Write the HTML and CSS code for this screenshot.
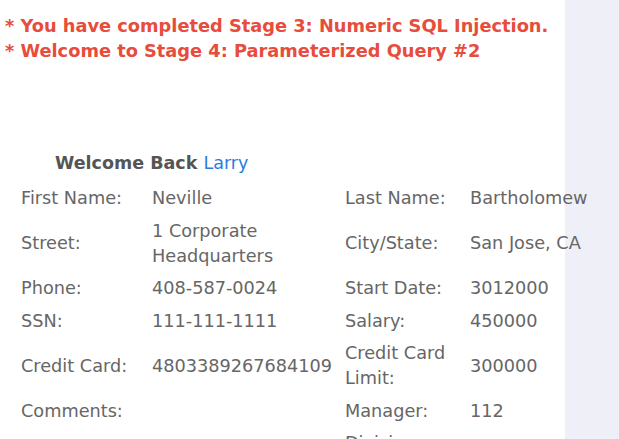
FILE: index.html
```html
<!DOCTYPE html>
<html>
<head>
<meta charset="utf-8">
<link rel="stylesheet" href="styles.css">
</head>
<body>
<div class="page">
  <main class="content">
    <div class="messages">
      <p class="msg">* You have completed Stage 3: Numeric SQL Injection.</p>
      <p class="msg">* Welcome to Stage 4: Parameterized Query #2</p>
    </div>
    <h2 class="welcome">Welcome Back <span class="user">Larry</span></h2>
    <div class="profile">
      <div class="lbl">First Name:</div><div class="val">Neville</div>
      <div class="lbl">Last Name:</div><div class="val">Bartholomew</div>

      <div class="lbl">Street:</div><div class="val">1 Corporate<br>Headquarters</div>
      <div class="lbl">City/State:</div><div class="val">San Jose, CA</div>

      <div class="lbl">Phone:</div><div class="val">408-587-0024</div>
      <div class="lbl">Start Date:</div><div class="val">3012000</div>

      <div class="lbl">SSN:</div><div class="val">111-111-1111</div>
      <div class="lbl">Salary:</div><div class="val">450000</div>

      <div class="lbl">Credit Card:</div><div class="val">4803389267684109</div>
      <div class="lbl">Credit Card<br>Limit:</div><div class="val">300000</div>

      <div class="lbl">Comments:</div><div class="val"></div>
      <div class="lbl">Manager:</div><div class="val">112</div>

      <div class="lbl"></div><div class="val"></div>
      <div class="lbl">Division:</div><div class="val"></div>
    </div>
  </main>
  <aside class="side"></aside>
</div>
</body>
</html>
```
FILE: styles.css
```css
html, body {
  margin: 0;
  padding: 0;
  height: 100%;
  overflow: hidden;
}
body {
  font-family: "DejaVu Sans", sans-serif;
  background: #ffffff;
}
.page {
  display: grid;
  grid-template-columns: 565px 1fr;
  min-height: 100%;
}
.side {
  background: #eff0f7;
}
.content {
  position: relative;
  z-index: 1;
  width: 619px;
  padding: 13px 0 0 5px;
  box-sizing: border-box;
}
.messages {
  margin: 0;
}
.msg {
  margin: 0;
  color: #e74c3c;
  font-weight: bold;
  font-size: 17.8px;
  line-height: 25px;
}
.welcome {
  margin: 88px 0 0 50px;
  font-size: 17.5px;
  line-height: 25px;
  font-weight: bold;
  color: #555555;
}
.user {
  color: #2a7ae2;
  font-weight: normal;
}
.profile {
  display: grid;
  grid-template-columns: 131px 193px 125px auto;
  align-items: center;
  margin: 6.5px 0 0 16px;
  font-size: 17.7px;
  line-height: 25px;
  color: #666666;
}
.lbl, .val {
  padding: 3.5px 0 4px;
}
```
